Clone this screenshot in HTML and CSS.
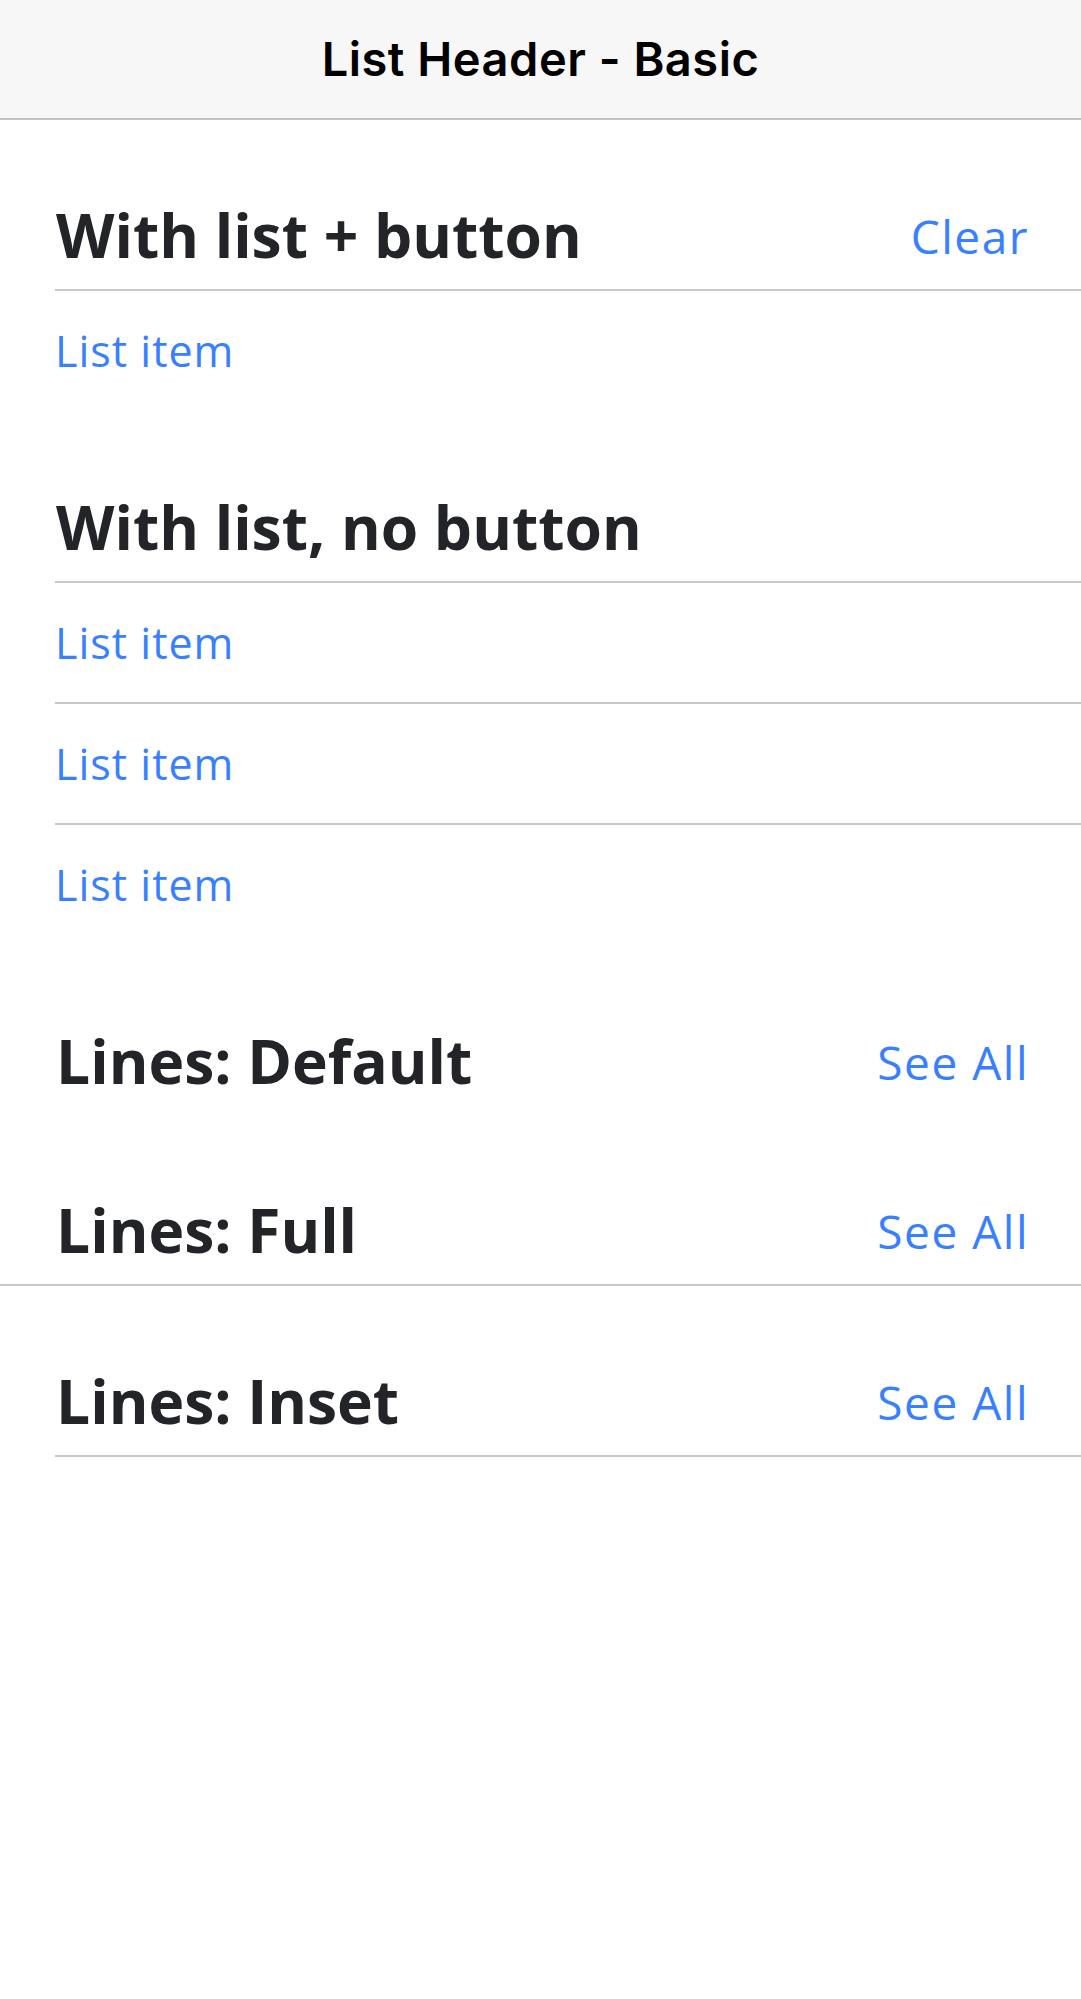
FILE: index.html
```html
<!DOCTYPE html>
<html lang="en">
<head>
<meta charset="utf-8">
<title>List Header - Basic</title>
<link rel="stylesheet" href="styles.css">
</head>
<body>
<header class="toolbar">
  <h1 class="toolbar-title">List Header - Basic</h1>
</header>
<main class="content">
  <section class="group">
    <div class="list-header lines-inset">
      <span class="header-label">With list + button</span>
      <button class="header-btn">Clear</button>
    </div>
    <ul class="list">
      <li class="item last">List item</li>
    </ul>
  </section>

  <section class="group">
    <div class="list-header lines-inset">
      <span class="header-label">With list, no button</span>
    </div>
    <ul class="list">
      <li class="item">List item</li>
      <li class="item">List item</li>
      <li class="item last">List item</li>
    </ul>
  </section>

  <div class="list-header">
    <span class="header-label">Lines: Default</span>
    <button class="header-btn">See All</button>
  </div>
  <div class="list-header lines-full">
    <span class="header-label">Lines: Full</span>
    <button class="header-btn">See All</button>
  </div>
  <div class="list-header lines-inset">
    <span class="header-label">Lines: Inset</span>
    <button class="header-btn">See All</button>
  </div>
</main>
</body>
</html>
```

FILE: styles.css
```css
html, body {
  margin: 0;
  padding: 0;
  background: #ffffff;
}

body {
  font-family: "Open Sans", "Noto Sans", sans-serif;
  color: #222428;
}

.toolbar {
  height: 118px;
  background: #f7f7f7;
  border-bottom: 2px solid #c4c4c6;
  display: flex;
  align-items: center;
  justify-content: center;
}

.toolbar-title {
  margin: 0;
  font-family: Inter, "Open Sans", sans-serif;
  font-weight: 600;
  font-size: 47px;
  letter-spacing: 0.5px;
  line-height: 1;
  color: #000;
  padding-bottom: 2px;
}

.content {
  display: flex;
  flex-direction: column;
}

.list-header {
  position: relative;
  display: flex;
  align-items: flex-start;
  justify-content: space-between;
  height: 169px;
  box-sizing: border-box;
  padding: 0 52px 0 56px;
}

.header-label {
  font-family: "Open Sans", sans-serif;
  font-weight: 700;
  font-size: 60.5px;
  line-height: 1;
  color: #222428;
  padding-top: 85px;
  margin-right: auto;
}

.header-btn {
  border: 0;
  background: none;
  padding: 93px 0 0 0;
  margin: 0;
  font-family: "Open Sans", sans-serif;
  font-size: 46px;
  letter-spacing: 1.5px;
  color: #3880ff;
  line-height: 1;
}

.lines-inset {
  height: 171px;
}
.lines-inset::after {
  content: "";
  position: absolute;
  left: 55px;
  right: 0;
  bottom: 0;
  height: 2px;
  background: #c8c7cc;
}

.lines-full {
  height: 171px;
}
.lines-full::after {
  content: "";
  position: absolute;
  left: 0;
  right: 0;
  bottom: 0;
  height: 2px;
  background: #c8c7cc;
}

.list {
  list-style: none;
  margin: 0;
  padding: 0;
}

.item {
  position: relative;
  height: 121px;
  box-sizing: border-box;
  padding: 38px 0 0 55px;
  font-size: 43px;
  letter-spacing: 1px;
  line-height: 1;
  color: #3880ff;
}

.item::after {
  content: "";
  position: absolute;
  left: 55px;
  right: 0;
  bottom: 0;
  height: 2px;
  background: #c8c7cc;
}

.item.last::after {
  display: none;
}
```
